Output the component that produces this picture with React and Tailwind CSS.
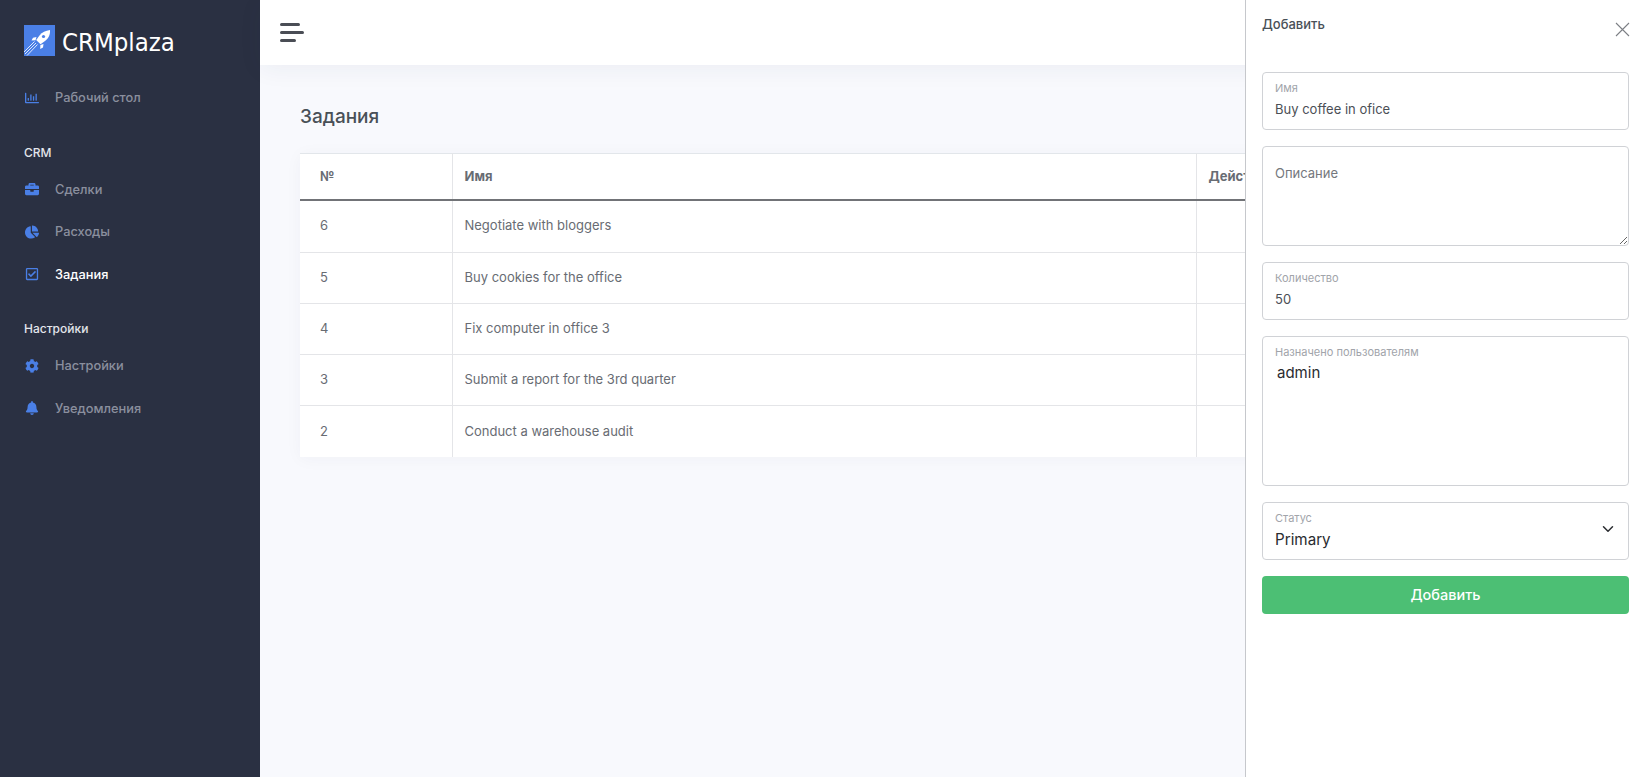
import { FaRegChartBar, FaBriefcase, FaChartPie, FaRegCheckSquare, FaCog, FaBell } from 'react-icons/fa';
import { ChevronDown } from 'lucide-react';

const Logo = () => (
  <svg width="31" height="31" viewBox="0 0 31 31" className="shrink-0">
    <rect width="31" height="31" fill="#4a7fe6" />
    <path d="M26 5c-4.500.6-8 2.300-10.500 5.500l-3.300 4.500 4.300 4.300 4.500-3.300C24.200 13.500 26.400 10 26 5z" fill="#fff" />
    <path d="M12.500 12 9 12.700l-1.500 2.800 4-.2zM19.500 19l-.5 3.500-2.800 1.500.2-4z" fill="#fff" />
    <circle cx="19.500" cy="11.500" r="1.600" fill="#4a7fe6" />
    <path d="M12 18 1 29M13.500 19.500 3 30.500M10.500 16.500 0 27" stroke="#dfe8fb" strokeWidth="1" />
  </svg>
);

const NavItem = ({ icon, label, active }) => (
  <div className="flex h-[42.5px] items-center pl-6">
    <span className="flex w-[31px] shrink-0 pl-[1px] text-[14px] text-[#4a7fe6]">{icon}</span>
    <span className={active ? 'text-[12.800px] font-medium text-white' : 'text-[12.800px] font-medium text-[#8a8f9e]'}>{label}</span>
  </div>
);

const NavLabel = ({ children }) => (
  <div className="mt-[25.500px] mb-[7.500px] h-4 pl-6 text-[12px] leading-4 font-medium text-[#e4e6ec]">{children}</div>
);

const Field = ({ label, value }) => (
  <div className="h-[58px] rounded border border-[#d0d2d6] bg-white px-[12px] pt-[8px]">
    <div className="text-[11px] leading-[14px] text-[#a1a4aa]">{label}</div>
    <input readOnly value={value} className="mt-[4px] w-full text-[13px] leading-5 text-[#4b4f56] outline-none" />
  </div>
);

const rows = [
  { id: 6, name: 'Negotiate with bloggers' },
  { id: 5, name: 'Buy cookies for the office' },
  { id: 4, name: 'Fix computer in office 3' },
  { id: 3, name: 'Submit a report for the 3rd quarter' },
  { id: 2, name: 'Conduct a warehouse audit' },
];

export default function App() {
  return (
    <div className="relative flex h-screen overflow-hidden bg-[#f8f9fd] font-['Inter',sans-serif]">
      {/* Sidebar */}
      <aside className="w-[260px] shrink-0 bg-[#2a3042]">
        <div className="flex h-[76.500px] items-start pl-6 pt-[25px]">
          <Logo />
          <span className="ml-[7px] pt-[2px] font-['DejaVu_Sans',sans-serif] text-[25.500px] leading-[31px] font-normal font-stretch-condensed tracking-[0px] text-white">CRMplaza</span>
        </div>
        <NavItem icon={<FaRegChartBar />} label="Рабочий стол" />
        <NavLabel>CRM</NavLabel>
        <NavItem icon={<FaBriefcase />} label="Сделки" />
        <NavItem icon={<FaChartPie />} label="Расходы" />
        <NavItem icon={<FaRegCheckSquare />} label="Задания" active />
        <NavLabel>Настройки</NavLabel>
        <NavItem icon={<FaCog />} label="Настройки" />
        <NavItem icon={<FaBell />} label="Уведомления" />
      </aside>

      {/* Main */}
      <div className="min-w-0 flex-1">
        <header className="flex h-[65px] items-center bg-white pl-[20px] shadow-[0_4px_24px_rgba(40,50,80,0.06)]">
          <div className="flex flex-col gap-[5px]">
            <span className="h-[3px] w-[20px] rounded-sm bg-[#4a4d55]" />
            <span className="h-[3px] w-[24px] rounded-sm bg-[#4a4d55]" />
            <span className="h-[3px] w-[16px] rounded-sm bg-[#4a4d55]" />
          </div>
        </header>
        <main className="px-10">
          <h1 className="mt-[42px] h-[24px] text-[19px] leading-[20px] font-medium text-[#495057]">Задания</h1>
          <div className="mt-[22px] bg-white shadow-[0_2px_16px_rgba(40,50,80,0.04)]">
            <table className="w-full table-fixed border-collapse text-[13px] text-[#686c73]">
              <colgroup>
                <col className="w-[152px]" />
                <col className="w-[744px]" />
                <col />
              </colgroup>
              <thead>
                <tr className="h-[46px] border-t border-b-2 border-t-[#e2e6ea] border-b-[#717377] text-left">
                  <th className="border-r border-[#e4e5e8] pl-5 font-bold">№</th>
                  <th className="border-r border-[#e4e5e8] pl-3 font-bold">Имя</th>
                  <th className="pl-3 font-bold">Действия</th>
                </tr>
              </thead>
              <tbody>
                {rows.map((r, i) => (
                  <tr key={r.id} className={i === 0 ? 'h-[53px] border-b border-[#e4e5e8]' : 'h-[51px] border-b border-[#e4e5e8] last:border-b-0'}>
                    <td className={i === 0 ? 'border-r border-[#e4e5e8] pb-[2px] pl-5' : 'border-r border-[#e4e5e8] pl-5'}>{r.id}</td>
                    <td className={i === 0 ? 'border-r border-[#e4e5e8] pb-[2px] pl-3' : 'border-r border-[#e4e5e8] pl-3'}>{r.name}</td>
                    <td />
                  </tr>
                ))}
              </tbody>
            </table>
          </div>
        </main>
      </div>

      {/* Add panel */}
      <div className="absolute top-0 right-0 h-full w-[400px] border-l border-[#c6c8cc] bg-white pr-4 pl-4">
        <div className="flex h-[72px] items-start justify-between">
          <span className="mt-[15.500px] text-[13px] leading-4 font-medium text-[#495057]">Добавить</span>
          <svg width="15" height="15" viewBox="0 0 15 15" className="mt-[22px] mr-[-1px]" stroke="#7c7f85" strokeWidth="1.100" fill="none">
            <path d="M1 1l13 13M14 1 1 14" />
          </svg>
        </div>
        <div className="flex flex-col gap-4">
          <Field label="Имя" value="Buy coffee in ofice" />
          <textarea
            readOnly
            placeholder="Описание"
            className="block h-[100px] w-full rounded border border-[#d0d2d6] px-[12px] pt-[16px] text-[13px] leading-5 outline-none placeholder:text-[#74777d]"
          />
          <Field label="Количество" value="50" />
          <div className="h-[150px] rounded border border-[#d0d2d6] px-[12px] pt-[8px]">
            <div className="text-[11px] leading-[14px] text-[#a1a4aa]">Назначено пользователям</div>
            <div className="mt-[4px] ml-[2px] text-[15px] leading-5 text-[#2a2c30]">admin</div>
          </div>
          <div className="relative h-[58px] rounded border border-[#d0d2d6] px-[12px] pt-[8px]">
            <div className="text-[11px] leading-[14px] text-[#a1a4aa]">Статус</div>
            <div className="mt-[5px] text-[15.200px] leading-5 text-[#2a2c30]">Primary</div>
            <ChevronDown size={18} strokeWidth={2} className="absolute top-[17px] right-[11px] text-[#2a2c30]" />
          </div>
          <button className="h-[38px] w-full rounded bg-[#4cbf74] text-[14.500px] font-medium text-white">Добавить</button>
        </div>
      </div>
    </div>
  );
}
